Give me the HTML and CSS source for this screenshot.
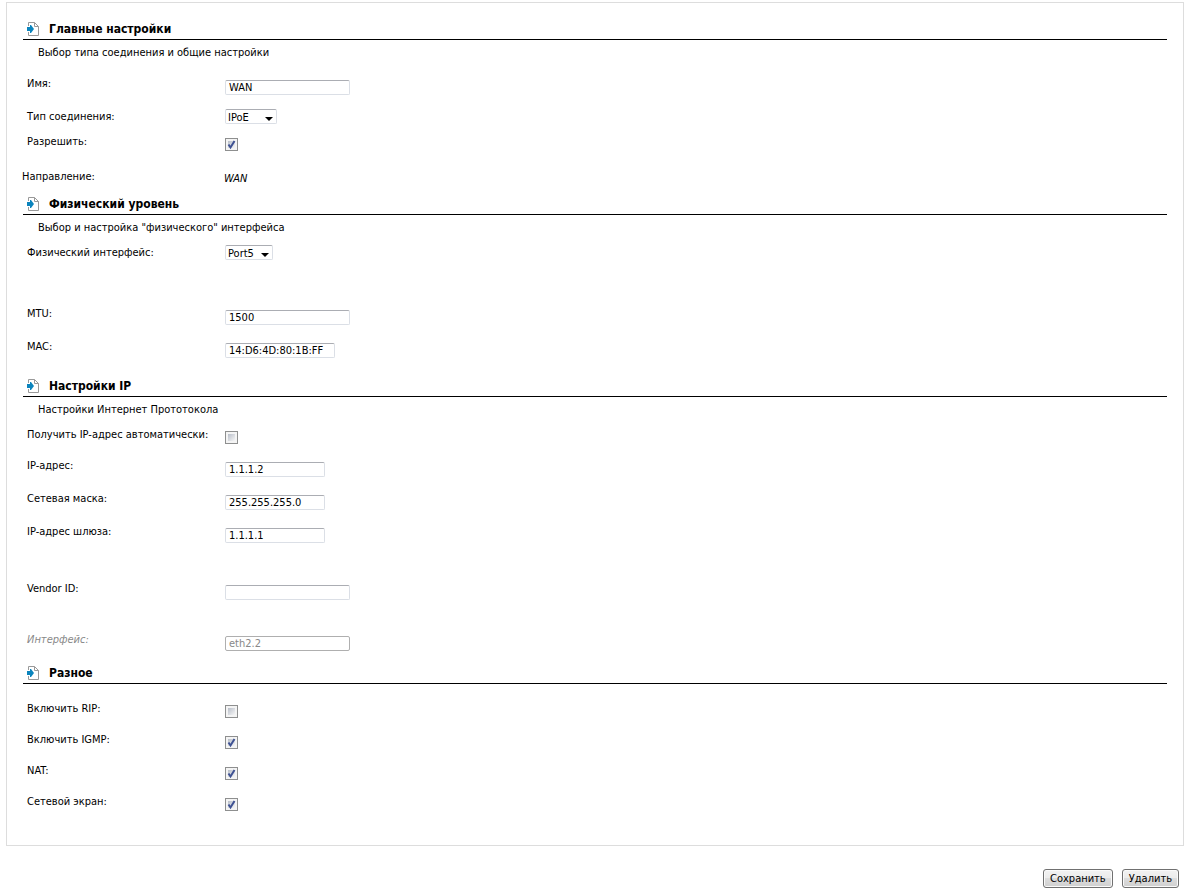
FILE: index.html
```html
<!DOCTYPE html>
<html lang="ru">
  <head>
    <meta charset="UTF-8" />
    <title>WAN</title>
    <meta name="viewport" content="width=device-width, initial-scale=1.0" />
    <link rel="stylesheet" href="styles.css">
  </head>
  <body>
    <svg class="sprite" aria-hidden="true">
      <symbol id="icon-section" viewBox="0 0 12 14">
        <path d="M1.500 4V.5h6l4 4v9h-10V10" fill="none" stroke="#999" />
        <path d="M7.500.5v4h4" fill="none" stroke="#999" />
        <path d="M0 5h3V3h1l3 4-3 4H3V9H0z" fill="#0b84bd" />
      </symbol>
    </svg>

    <form>
      <div class="panel">
        <!-- Main settings -->
        <section class="section">
          <h2><svg class="icon"><use href="#icon-section" /></svg>Главные настройки</h2>
          <p class="hint">Выбор типа соединения и общие настройки</p>
          <div class="group group-main">
            <div class="row">
              <label for="name">Имя:</label>
              <input type="text" id="name" value="WAN" />
            </div>
            <div class="row row-select">
              <label for="type">Тип соединения:</label>
              <select id="type">
                <option>IPoE</option>
              </select>
            </div>
            <div class="row">
              <label for="enable">Разрешить:</label>
              <input type="checkbox" id="enable" checked />
            </div>
          </div>
          <div class="row row-static">
            <span>Направление:</span>
            <em>WAN</em>
          </div>
        </section>

        <!-- Physical layer -->
        <section class="section section-tight">
          <h2><svg class="icon"><use href="#icon-section" /></svg>Физический уровень</h2>
          <p class="hint">Выбор и настройка "физического" интерфейса</p>
          <div class="group">
            <div class="row row-select">
              <label for="port">Физический интерфейс:</label>
              <select id="port">
                <option>Port5</option>
              </select>
            </div>
          </div>
          <div class="group group-far">
            <div class="row">
              <label for="mtu">MTU:</label>
              <input type="text" id="mtu" value="1500" />
            </div>
            <div class="row">
              <label for="mac">MAC:</label>
              <input type="text" id="mac" class="mac" value="14:D6:4D:80:1B:FF" />
            </div>
          </div>
        </section>

        <!-- IP settings -->
        <section class="section section-loose">
          <h2><svg class="icon"><use href="#icon-section" /></svg>Настройки IP</h2>
          <p class="hint">Настройки Интернет Прототокола</p>
          <div class="group">
            <div class="row">
              <label for="auto">Получить IP-адрес автоматически:</label>
              <input type="checkbox" id="auto" />
            </div>
            <div class="row">
              <label for="ip">IP-адрес:</label>
              <input type="text" id="ip" class="ip" value="1.1.1.2" />
            </div>
            <div class="row">
              <label for="mask">Сетевая маска:</label>
              <input type="text" id="mask" class="ip" value="255.255.255.0" />
            </div>
            <div class="row">
              <label for="gateway">IP-адрес шлюза:</label>
              <input type="text" id="gateway" class="ip" value="1.1.1.1" />
            </div>
          </div>
          <div class="group group-apart">
            <div class="row">
              <label for="vendor">Vendor ID:</label>
              <input type="text" id="vendor" />
            </div>
          </div>
          <div class="group group-last">
            <div class="row row-disabled">
              <label for="iface">Интерфейс:</label>
              <input type="text" id="iface" value="eth2.2" disabled />
            </div>
          </div>
        </section>

        <!-- Misc -->
        <section class="section">
          <h2><svg class="icon"><use href="#icon-section" /></svg>Разное</h2>
          <div class="group group-misc">
            <div class="row">
              <label for="rip">Включить RIP:</label>
              <input type="checkbox" id="rip" />
            </div>
            <div class="row">
              <label for="igmp">Включить IGMP:</label>
              <input type="checkbox" id="igmp" checked />
            </div>
            <div class="row">
              <label for="nat">NAT:</label>
              <input type="checkbox" id="nat" checked />
            </div>
            <div class="row">
              <label for="firewall">Сетевой экран:</label>
              <input type="checkbox" id="firewall" checked />
            </div>
          </div>
        </section>
      </div>

      <div class="actions">
        <button type="submit">Сохранить</button>
        <button type="button">Удалить</button>
      </div>
    </form>
  </body>
</html>
```

FILE: styles.css
```css
body {
  margin: 2px 5px 0 6px;
  background: #fff;
  color: #000;
  font-family: Tahoma, "DejaVu Sans Condensed", "Noto Sans", sans-serif;
  font-size: 11px;
  line-height: 16px;
}
.sprite {
  display: none;
}
.panel {
  border: 1px solid #ddd;
  padding: 4px 16px 34px;
}

.section {
  margin-top: 10px;
}
.section-tight {
  margin-top: 5px;
}
.section-loose {
  margin-top: 16px;
}
h2 {
  display: flex;
  align-items: center;
  gap: 10px;
  margin: 0;
  padding: 2px 0 0 4px;
  border-bottom: 1px solid #000;
  font-size: 12px;
  line-height: 20px;
}
.icon {
  width: 12px;
  height: 14px;
}
.hint {
  margin: 5px 0 0 15px;
}

.group {
  margin-top: 9px;
  padding-left: 4px;
}
.group-main {
  margin-top: 15px;
}
.group-misc {
  margin-top: 17px;
}
.group-far {
  margin-top: 45px;
}
.group-apart {
  margin-top: 38px;
}
.group-last {
  margin-top: 32px;
}
.row {
  display: grid;
  grid-template-columns: 198px 1fr;
  align-items: start;
}
.row + .row {
  margin-top: 14px;
}
.row-select + .row {
  margin-top: 9px;
}
.row-static {
  grid-template-columns: 202px 1fr;
  margin: 18px 0 0 -1px;
}
.row-static em {
  margin-top: 2px;
}
.row-disabled {
  color: #888;
  font-style: italic;
}

input,
select,
button {
  box-sizing: border-box;
  margin: 0;
  font: inherit;
  font-style: normal;
  color: #000;
}
input[type="text"] {
  width: 125px;
  height: 15px;
  margin-top: 4px;
  padding: 0 3px;
  border: 1px solid #dbdfe6;
  border-top-color: #abadb3;
  border-radius: 2px;
  background: #fff;
}
input[type="text"].mac {
  width: 110px;
}
input[type="text"].ip {
  width: 100px;
}
input[type="text"]:disabled {
  border-color: #afafaf;
  color: #888;
}
select {
  appearance: none;
  justify-self: start;
  height: 15px;
  padding: 0 27px 0 2px;
  border: 1px solid #dbdfe6;
  border-top-color: #abadb3;
  border-radius: 2px;
  background: #fff url("data:image/svg+xml,%3Csvg xmlns='http://www.w3.org/2000/svg' width='8' height='4'%3E%3Cpath d='M0 0h8L4 4z'/%3E%3C/svg%3E") no-repeat right 3px top 7px;
}
#port {
  padding-right: 18px;
}
input[type="checkbox"] {
  appearance: none;
  width: 13px;
  height: 13px;
  margin-top: 4px;
  padding: 2px;
  border: 1px solid #8e8f8f;
  background: linear-gradient(135deg, #b8bec9, #f6f6f6) no-repeat content-box, #f4f4f4;
}
input[type="checkbox"]:checked {
  background: url("data:image/svg+xml,%3Csvg xmlns='http://www.w3.org/2000/svg' width='11' height='11'%3E%3Cpath d='M2.500 5.500l2 3L8.500 2' fill='none' stroke='%233f5293' stroke-width='2'/%3E%3C/svg%3E") no-repeat,
    linear-gradient(135deg, #b8bec9, #f6f6f6) no-repeat content-box, #f4f4f4;
}

.actions {
  display: flex;
  justify-content: flex-end;
  gap: 9px;
  padding: 23px 5px 0;
}
button {
  height: 19px;
  padding: 0 6px;
  border: 1px solid #707070;
  border-radius: 3px;
  background: linear-gradient(#f2f2f2, #ebebeb 50%, #ddd 50%, #cfcfcf);
  box-shadow: inset 0 0 0 1px #fafafa;
}
```
